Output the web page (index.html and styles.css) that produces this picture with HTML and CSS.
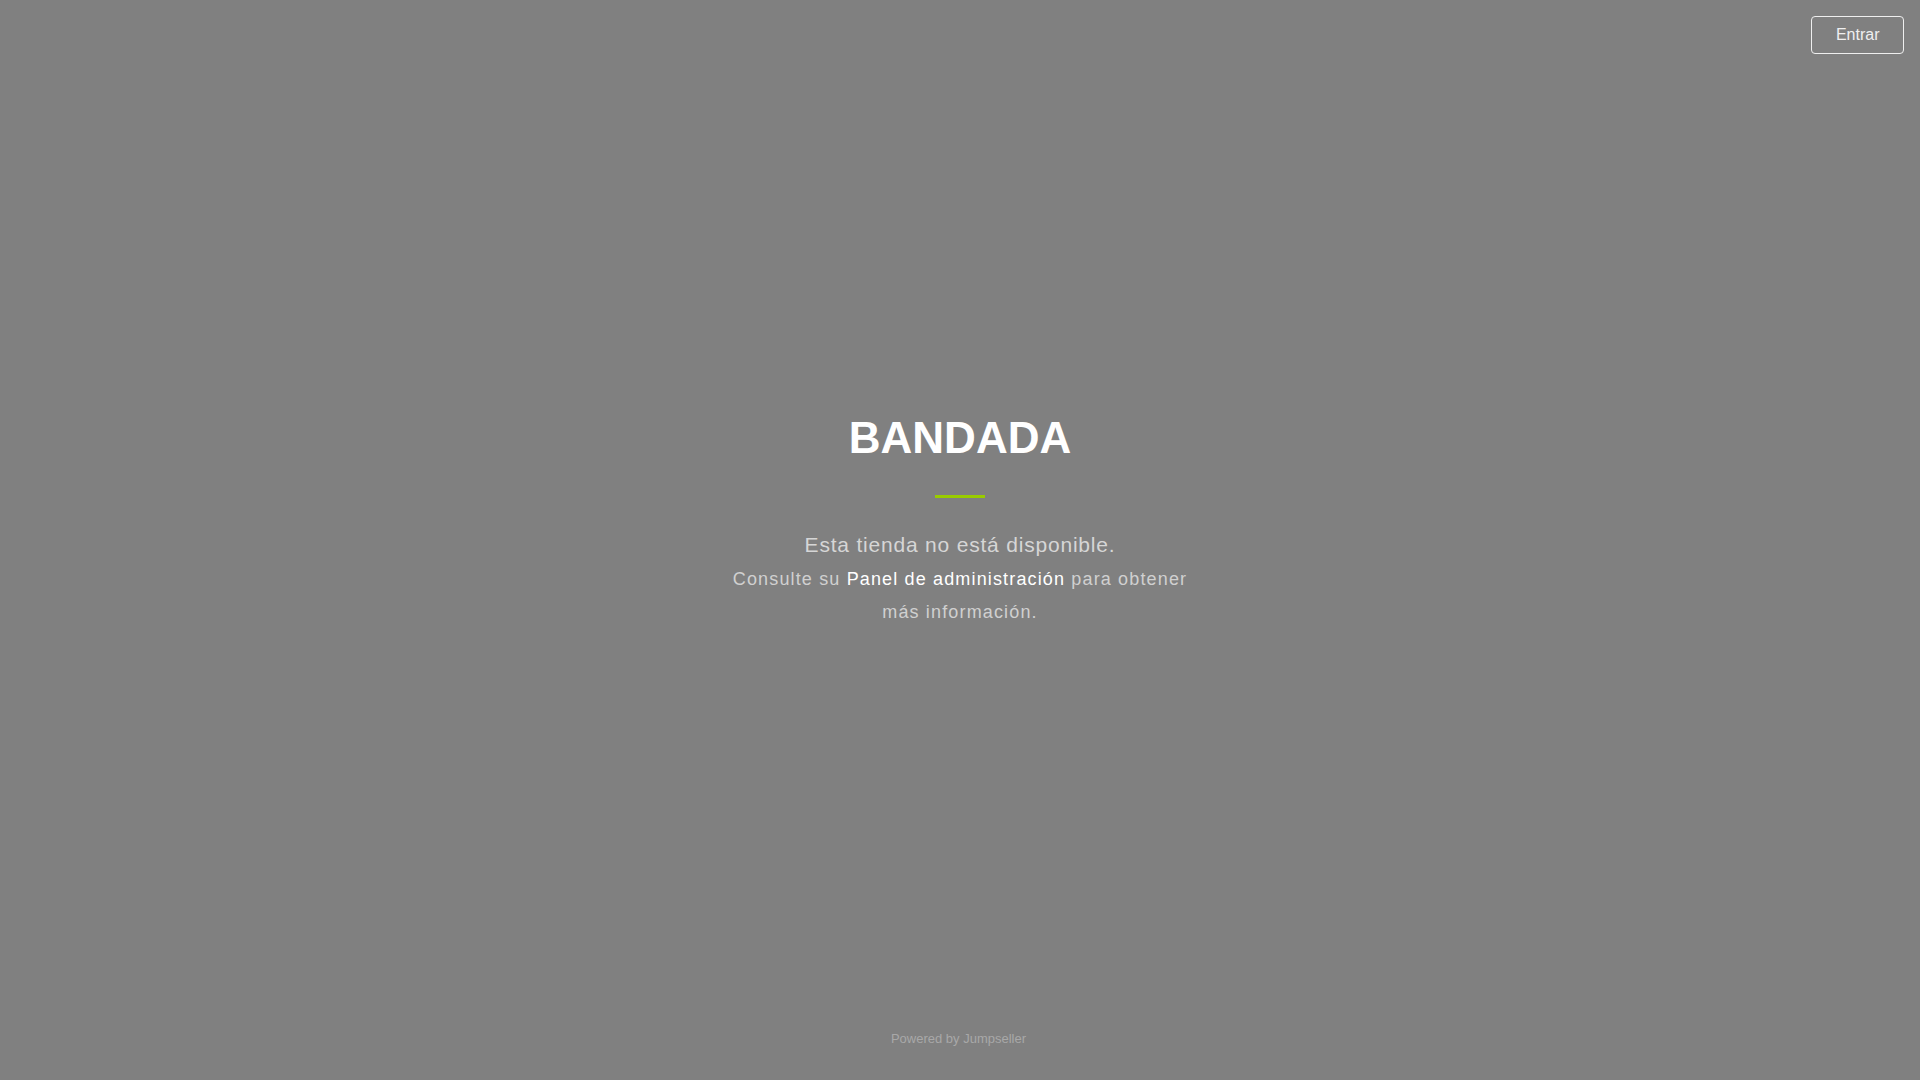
FILE: index.html
```html
<!DOCTYPE html>
<html lang="es">
<head>
<meta charset="utf-8">
<title>BANDADA</title>
<link rel="stylesheet" href="styles.css">
</head>
<body>
<div class="page">
  <header class="topbar">
    <a class="login-btn" href="#">Entrar</a>
  </header>
  <main class="main">
    <div class="notice">
      <h1 class="store-name">BANDADA</h1>
      <div class="divider"></div>
      <p class="lead">Esta tienda no está disponible.</p>
      <p class="info">Consulte su <a class="admin-link" href="#">Panel de administración</a> para obtener más información.</p>
    </div>
  </main>
  <footer class="footer">Powered by Jumpseller</footer>
</div>
</body>
</html>
```

FILE: styles.css
```css
html, body {
  margin: 0;
  padding: 0;
}

body {
  background: #808080;
  font-family: "Liberation Sans", Arial, Helvetica, sans-serif;
  color: #d4d4d4;
}

.page {
  min-height: 100vh;
  display: flex;
  flex-direction: column;
}

.topbar {
  display: flex;
  justify-content: flex-end;
  padding: 16px 16px 0;
}

.login-btn {
  display: flex;
  align-items: center;
  box-sizing: border-box;
  height: 38px;
  padding: 0 23.5px;
  border: 1px solid #efefef;
  border-radius: 4px;
  color: #efefef;
  font-size: 16px;
  text-decoration: none;
}

.main {
  flex: 1;
  display: flex;
  align-items: center;
  justify-content: center;
  padding-bottom: 41px;
}

.notice {
  display: flex;
  flex-direction: column;
  align-items: center;
  text-align: center;
}

.store-name {
  margin: 0;
  font-size: 44px;
  line-height: 48px;
  font-weight: bold;
  color: #ffffff;
}

.divider {
  width: 50px;
  height: 3px;
  background: #99cc00;
  margin-top: 33px;
}

.lead {
  margin: 32px 0 0;
  font-size: 21px;
  line-height: 30px;
  letter-spacing: 0.8px;
  color: #d6d6d6;
}

.info {
  margin: 3px 0 0;
  width: 470px;
  font-size: 18px;
  line-height: 33px;
  letter-spacing: 1.15px;
  color: #d0d0d0;
}

.admin-link {
  color: #ffffff;
  text-decoration: none;
}

.footer {
  padding: 0 3px 32px 0;
  text-align: center;
  font-size: 13px;
  line-height: 18px;
  color: #a8a8a8;
}
```
